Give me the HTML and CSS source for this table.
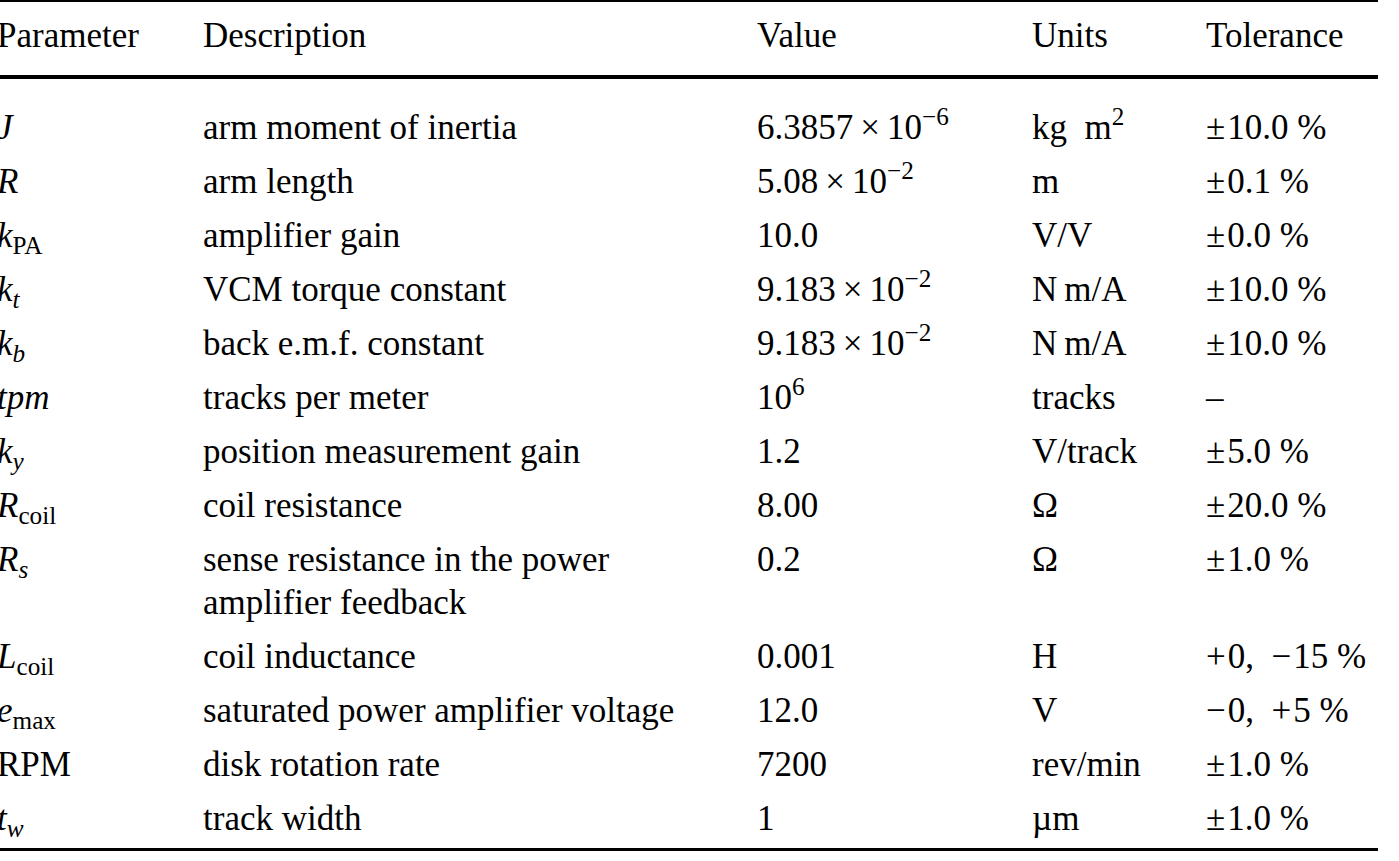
FILE: index.html
```html
<!DOCTYPE html>
<html lang="en">
<head>
<meta charset="utf-8">
<title>Parameters</title>
<link rel="stylesheet" href="styles.css">
</head>
<body>
<div class="frame">
<table class="params">
  <colgroup>
    <col class="c-param">
    <col class="c-desc">
    <col class="c-val">
    <col class="c-unit">
    <col class="c-tol">
  </colgroup>
  <thead>
    <tr>
      <th>Parameter</th>
      <th>Description</th>
      <th>Value</th>
      <th>Units</th>
      <th>Tolerance</th>
    </tr>
  </thead>
  <tbody>
    <tr>
      <td><i>J</i></td>
      <td>arm moment of inertia</td>
      <td>6.3857<span class="op">×</span>10<sup>−6</sup></td>
      <td>kg&nbsp;&nbsp;m<sup>2</sup></td>
      <td><span class="pm">±</span>10.0 %</td>
    </tr>
    <tr>
      <td><i>R</i></td>
      <td>arm length</td>
      <td>5.08<span class="op">×</span>10<sup>−2</sup></td>
      <td>m</td>
      <td><span class="pm">±</span>0.1 %</td>
    </tr>
    <tr>
      <td><i>k</i><sub>PA</sub></td>
      <td>amplifier gain</td>
      <td>10.0</td>
      <td>V/V</td>
      <td><span class="pm">±</span>0.0 %</td>
    </tr>
    <tr>
      <td><i>k</i><sub><i>t</i></sub></td>
      <td>VCM torque constant</td>
      <td>9.183<span class="op">×</span>10<sup>−2</sup></td>
      <td>N&#8201;m/A</td>
      <td><span class="pm">±</span>10.0 %</td>
    </tr>
    <tr>
      <td><i>k</i><sub><i>b</i></sub></td>
      <td>back e.m.f. constant</td>
      <td>9.183<span class="op">×</span>10<sup>−2</sup></td>
      <td>N&#8201;m/A</td>
      <td><span class="pm">±</span>10.0 %</td>
    </tr>
    <tr>
      <td><i>tpm</i></td>
      <td>tracks per meter</td>
      <td>10<sup>6</sup></td>
      <td>tracks</td>
      <td>–</td>
    </tr>
    <tr>
      <td><i>k</i><sub><i>y</i></sub></td>
      <td>position measurement gain</td>
      <td>1.2</td>
      <td>V/track</td>
      <td><span class="pm">±</span>5.0 %</td>
    </tr>
    <tr>
      <td><i>R</i><sub>coil</sub></td>
      <td>coil resistance</td>
      <td>8.00</td>
      <td>Ω</td>
      <td><span class="pm">±</span>20.0 %</td>
    </tr>
    <tr>
      <td><i>R</i><sub><i>s</i></sub></td>
      <td>sense resistance in the power amplifier feedback</td>
      <td>0.2</td>
      <td>Ω</td>
      <td><span class="pm">±</span>1.0 %</td>
    </tr>
    <tr>
      <td><i>L</i><sub>coil</sub></td>
      <td>coil inductance</td>
      <td>0.001</td>
      <td>H</td>
      <td><span class="pm">+</span>0,&nbsp; <span class="pm">−</span>15 %</td>
    </tr>
    <tr>
      <td><i>e</i><sub>max</sub></td>
      <td>saturated power amplifier voltage</td>
      <td>12.0</td>
      <td>V</td>
      <td><span class="pm">−</span>0,&nbsp; <span class="pm">+</span>5 %</td>
    </tr>
    <tr>
      <td>RPM</td>
      <td>disk rotation rate</td>
      <td>7200</td>
      <td>rev/min</td>
      <td><span class="pm">±</span>1.0 %</td>
    </tr>
    <tr>
      <td><i>t</i><sub><i>w</i></sub></td>
      <td>track width</td>
      <td>1</td>
      <td>µm</td>
      <td><span class="pm">±</span>1.0 %</td>
    </tr>
  </tbody>
</table>
</div>
</body>
</html>
```

FILE: styles.css
```css
html, body {
  margin: 0;
  padding: 0;
  background: #ffffff;
}

body {
  overflow: hidden;
}

.frame {
  width: 1378px;
  overflow: hidden;
}

.params {
  margin-left: -3px;
  width: 1381px;
  table-layout: fixed;
  border-collapse: collapse;
  font-family: "Liberation Serif", "Times New Roman", serif;
  font-size: 35px;
  line-height: 43px;
  color: #000000;
  border-top: 2px solid #000000;
  border-bottom: 3px solid #000000;
}

.c-param { width: 206px; }
.c-desc  { width: 554px; }
.c-val   { width: 275px; }
.c-unit  { width: 174px; }
.c-tol   { width: 172px; }

.params th,
.params td {
  text-align: left;
  vertical-align: top;
  padding: 5px 28px 6px 0;
  white-space: nowrap;
}

.params th {
  font-weight: normal;
  padding-top: 12px;
  padding-bottom: 18px;
  border-bottom: 4px solid #000000;
}

.params td:nth-child(2) {
  white-space: normal;
}

.params td:last-child,
.params th:last-child {
  padding-right: 0;
}

.params tbody tr:first-child td {
  padding-top: 27px;
}

.params tbody tr:last-child td {
  padding-bottom: 8px;
}

.params i {
  font-style: italic;
}

.params .op {
  margin: 0 7px;
}

.params .pm {
  margin-right: 2px;
}

.params sub {
  font-size: 0.72em;
  line-height: 0;
  vertical-align: -0.28em;
}

.params sup {
  font-size: 0.72em;
  line-height: 0;
  vertical-align: 0.55em;
}
```
